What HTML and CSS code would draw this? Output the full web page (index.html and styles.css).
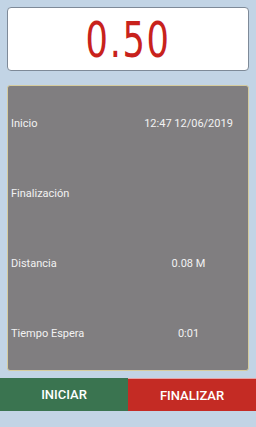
FILE: index.html
```html
<!DOCTYPE html>
<html lang="es">
<head>
    <meta charset="UTF-8">
    <meta name="viewport" content="width=device-width, initial-scale=1.0">
    <title>Taxímetro</title>
    <link rel="stylesheet" href="styles.css">
</head>
<body>
    <div class="top">
        <div class="display">
            <span class="amount">0.50</span>
        </div>
        <div class="trip-info">
            <div class="row">
                <span class="label">Inicio</span>
                <span class="value">12:47 12/06/2019</span>
            </div>
            <div class="row">
                <span class="label">Finalización</span>
                <span class="value"></span>
            </div>
            <div class="row">
                <span class="label">Distancia</span>
                <span class="value">0.08 M</span>
            </div>
            <div class="row">
                <span class="label">Tiempo Espera</span>
                <span class="value">0:01</span>
            </div>
        </div>
    </div>
    <div class="actions">
        <button class="btn start">INICIAR</button>
        <button class="btn stop">FINALIZAR</button>
    </div>
</body>
</html>
```

FILE: styles.css
```css
html, body {
    margin: 0;
    padding: 0;
    width: 100%;
    height: 100%;
    background-color: #c2d4e5; /* light blue app background */
    font-family: Roboto, "Liberation Sans", sans-serif;
    overflow: hidden;
}

.top {
    padding: 7px 7px 0;
}

/* Fare display */
.display {
    height: 62px;
    background-color: #fff;
    border: 1px solid #7e8a98;
    border-radius: 4px;
    display: flex;
    justify-content: center;
    align-items: center;
}

.amount {
    font-family: "DejaVu Sans Condensed", "DejaVu Sans", sans-serif;
    font-size: 49px;
    line-height: 1;
    color: #c8221c;
    letter-spacing: 2px;
    transform: scaleX(0.8);
    margin-top: 2px;
}

/* Trip details panel */
.trip-info {
    margin-top: 14px;
    height: 280px;
    padding: 2px 0 2px 2px;
    background-color: #807e80;
    border: 1px solid #d6cc9e;
    border-radius: 3px;
}

.row {
    height: 70px;
    display: grid;
    grid-template-columns: 1fr 1fr;
    align-items: center;
    color: #f2f2f2;
    font-size: 11px;
}

.row .label {
    padding-left: 1px;
}

.row .value {
    text-align: center;
}

/* Bottom buttons */
.actions {
    margin-top: 7px;
    display: flex;
    height: 33px;
}

.btn {
    flex: 1;
    border: none;
    margin: 0;
    padding: 0;
    color: #fff;
    font-family: Roboto, "Liberation Sans", sans-serif;
    font-size: 13px;
    font-weight: 500;
}

.btn.start {
    background-color: #3a7450;
}

.btn.stop {
    background-color: #c42b24;
    border-top: 1px solid #e7a4a6;
}
```
